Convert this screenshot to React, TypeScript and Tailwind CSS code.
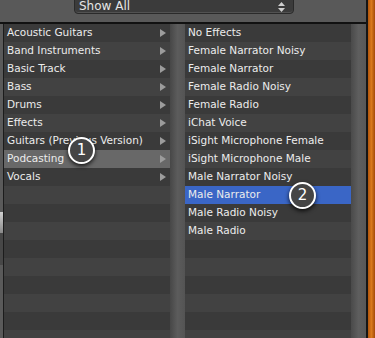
import React from 'react';

const leftItems = [
    'Acoustic Guitars',
    'Band Instruments',
    'Basic Track',
    'Bass',
    'Drums',
    'Effects',
    'Guitars (Previous Version)',
    'Podcasting',
    'Vocals',
];

const rightItems = [
    'No Effects',
    'Female Narrator Noisy',
    'Female Narrator',
    'Female Radio Noisy',
    'Female Radio',
    'iChat Voice',
    'iSight Microphone Female',
    'iSight Microphone Male',
    'Male Narrator Noisy',
    'Male Narrator',
    'Male Radio Noisy',
    'Male Radio',
];

const ROWS = 18;

const Arrow: React.FC = () => (
    <svg width="6" height="8" viewBox="0 0 6 8" className="mr-[4px] shrink-0">
        <path d="M0 0 L6 4 L0 8 Z" fill="#9c9c9c" />
    </svg>
);

const Badge: React.FC<{ n: number; className: string }> = ({ n, className }) => (
    <div
        className={`absolute w-[27px] h-[27px] rounded-full border-2 border-white bg-[#454545] flex items-center justify-center text-white text-[15px] shadow-[0_2px_4px_rgba(0,0,0,0.8)] ${className}`}
        style={{ fontFamily: '"DejaVu Sans", sans-serif' }}
    >
        {n}
    </div>
);

const Column: React.FC<{ items: string[]; selected: number; selectedClass: string; arrows?: boolean }> = ({ items, selected, selectedClass, arrows }) => (
    <div className="w-[166px] flex flex-col">
        {Array.from({ length: ROWS }).map((_, i) => {
            const label = items[i];
            const stripe = i % 2 === 0 ? 'bg-[#3a3a3a]' : 'bg-[#424242]';
            const bg = i === selected ? selectedClass : stripe;
            return (
                <div key={i} className={`h-[18px] shrink-0 flex items-center justify-between pl-[3px] ${bg}`}>
                    <span className="text-[#ececec] text-[10.5px] whitespace-nowrap">{label}</span>
                    {arrows && label && <Arrow />}
                </div>
            );
        })}
    </div>
);

export default function App() {
    return (
        <div
            className="w-[375px] h-[338px] overflow-hidden flex bg-[#585858] relative"
            style={{ fontFamily: '"DejaVu Sans", "Lucida Grande", sans-serif' }}
        >
            <div className="w-[366px] flex flex-col">
                <div className="h-[22px] shrink-0 bg-[#595959] overflow-hidden">
                    <div className="ml-[74px] mt-[-8px] w-[220px] h-[22px] rounded-[4px] bg-[#3b3b3b] border border-[#2a2a2a] shadow-[inset_0_-1px_0_rgba(255,255,255,0.12)] flex items-center justify-between pl-[4px] pr-[8px]">
                        <span className="text-[#e6e6e6] text-[12px] pt-[6px]">Show All</span>
                        <svg width="7" height="10" viewBox="0 0 7 10" className="mt-[8px]">
                            <path d="M3.5 0 L7 4 L0 4 Z" fill="#cfcfcf" />
                            <path d="M0 6 L7 6 L3.5 10 Z" fill="#cfcfcf" />
                        </svg>
                    </div>
                </div>
                <div className="h-[2px] shrink-0 bg-[#111]" />
                <div className="flex flex-1 min-h-0">
                    <div className="w-[3px] flex flex-col bg-[#5a5a5a]">
                        <div className="h-[188px] shrink-0" />
                        <div className="h-[21px] shrink-0 bg-gradient-to-b from-[#d0d0d0] to-[#8a8a8a]" />
                        <div className="h-[32px] shrink-0 bg-[#474747]" />
                    </div>
                    <div className="w-[1px] bg-[#1c1c1c]" />
                    <Column items={leftItems} selected={7} selectedClass="bg-[#686868]" arrows />
                    <div className="w-[15px] bg-gradient-to-r from-[#474747] via-[#5c5c5c] to-[#545454]" />
                    <Column items={rightItems} selected={9} selectedClass="bg-[#3a66c6]" />
                    <div className="w-[15px] bg-gradient-to-r from-[#4a4a4a] via-[#5e5e5e] to-[#585858]" />
                </div>
            </div>
            <div className="w-[2px] bg-[#151515]" />
            <div className="w-[7px] bg-gradient-to-r from-[#b3560c] via-[#d9791c] to-[#a44a08]" />
            <Badge n={1} className="left-[68px] top-[137px]" />
            <Badge n={2} className="left-[289px] top-[182px]" />
        </div>
    );
}
